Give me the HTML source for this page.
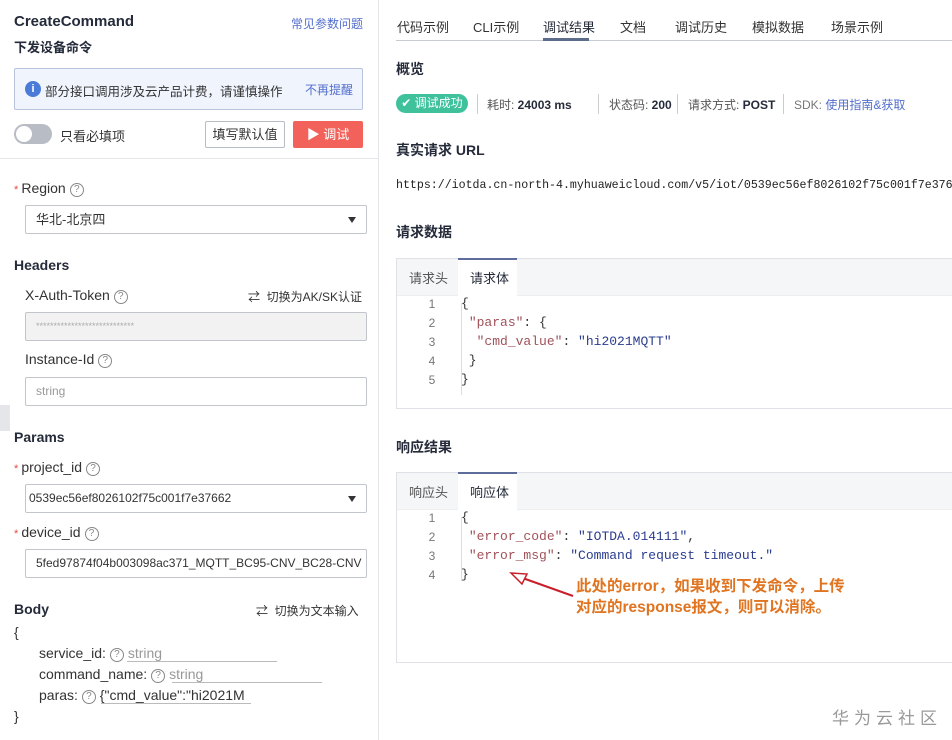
<!DOCTYPE html>
<html><head><meta charset="utf-8">
<style>
*{box-sizing:border-box;margin:0;padding:0}
body{width:952px;height:740px;overflow:hidden;background:#fff;font-family:"Liberation Sans","Noto Sans CJK SC",sans-serif;color:#252b3a;font-size:13px;position:relative}
.a{position:absolute;white-space:nowrap}
.b{font-weight:bold}
.q{display:inline-block;width:14px;height:14px;border:1px solid #888;border-radius:50%;font-size:10px;line-height:12px;text-align:center;color:#888;vertical-align:1px;margin-left:4px}
.inp{position:absolute;left:25px;width:342px;height:29px;border:1px solid #c2c6cc;border-radius:2px;font-size:12px;line-height:27px;padding-left:10px;color:#333;white-space:nowrap;overflow:hidden}
.star{color:#e5493f;font-size:11px}
.lbl{font-size:14px;color:#333}
.tri{position:absolute;right:10px;top:11px;width:0;height:0;border-left:4px solid transparent;border-right:4px solid transparent;border-top:6px solid #333}
.mono{font-family:"Liberation Mono",monospace}
.box{position:absolute;left:396px;width:560px;border:1px solid #dfe1e6}
.th{height:37px;background:#f5f6f8;position:relative;border-bottom:1px solid #eee}
.th span{position:absolute;top:9px;font-size:13px}
.act{position:absolute;left:61px;top:-1px;width:59px;height:38px;background:#fff;border-top:2px solid #5e6c9b}
.ln{position:absolute;left:30px;width:10px;text-align:center;font-size:12px;color:#777}
.cd{position:absolute;left:64px;font-size:13px;color:#333}
.k{color:#a0525a}.s{color:#2b3c8f}
.gut{position:absolute;left:64px;width:1px;background:#ddd}
</style></head><body>
<div class="a b" style="left:14px;top:13px;font-size:15px">CreateCommand</div>
<div class="a b" style="left:14px;top:37px;font-size:13px">下发设备命令</div>
<div class="a" style="left:291px;top:15px;font-size:12px;color:#526ecc">常见参数问题</div>
<div class="a" style="left:14px;top:68px;width:349px;height:42px;background:#f0f4fd;border:1px solid #b9c3de;border-radius:2px"></div>
<div class="a" style="left:25px;top:81px;width:16px;height:16px;border-radius:50%;background:#4a7bd8;color:#fff;font-size:11px;line-height:16px;text-align:center;font-weight:bold">i</div>
<div class="a" style="left:45px;top:81px;font-size:12.5px;color:#333">部分接口调用涉及云产品计费，请谨慎操作</div>
<div class="a" style="left:305px;top:81px;font-size:12px;color:#526ecc">不再提醒</div>
<div class="a" style="left:14px;top:124px;width:38px;height:20px;border-radius:10px;background:#b8bcc4"></div>
<div class="a" style="left:16px;top:126px;width:16px;height:16px;border-radius:50%;background:#fff"></div>
<div class="a" style="left:60px;top:126px;font-size:13px;color:#333">只看必填项</div>
<div class="a" style="left:205px;top:121px;width:80px;height:27px;border:1px solid #b8bcc4;border-radius:2px;font-size:13px;line-height:25px;text-align:center;color:#333">填写默认值</div>
<div class="a" style="left:293px;top:121px;width:70px;height:27px;background:#f2625b;border-radius:2px;font-size:13px;line-height:27px;text-align:center;color:#fff">▶&nbsp;调试</div>
<div class="a" style="left:0;top:158px;width:378px;height:1px;background:#e3e5e9"></div>
<div class="a" style="left:378px;top:0;width:1px;height:740px;background:#e3e5e9"></div>

<div class="a lbl" style="left:14px;top:180px"><span class="star">* </span>Region<span class="q">?</span></div>
<div class="inp" style="top:205px;font-size:13px">华北-北京四<div class="tri"></div></div>
<div class="a b" style="left:14px;top:257px;font-size:14px">Headers</div>
<div class="a lbl" style="left:25px;top:287px">X-Auth-Token<span class="q">?</span></div>
<div class="a" style="left:248px;top:288px;font-size:12px;color:#333">⇄&nbsp;&nbsp;切换为AK/SK认证</div>
<div class="inp" style="top:312px;background:#f2f2f2;color:#aaa;font-size:9px">****************************</div>
<div class="a lbl" style="left:25px;top:351px">Instance-Id<span class="q">?</span></div>
<div class="inp" style="top:377px;color:#999">string</div>
<div class="a" style="left:0;top:405px;width:10px;height:26px;background:#e4e6ea"></div>
<div class="a b" style="left:14px;top:429px;font-size:14px">Params</div>
<div class="a lbl" style="left:14px;top:459px"><span class="star">* </span>project_id<span class="q">?</span></div>
<div class="inp" style="top:484px;padding-left:3px">0539ec56ef8026102f75c001f7e37662<div class="tri"></div></div>
<div class="a lbl" style="left:14px;top:524px"><span class="star">* </span>device_id<span class="q">?</span></div>
<div class="inp" style="top:549px;font-size:12px">5fed97874f04b003098ac371_MQTT_BC95-CNV_BC28-CNV</div>
<div class="a b" style="left:14px;top:601px;font-size:14px">Body</div>
<div class="a" style="left:256px;top:602px;font-size:12px;color:#333">⇄&nbsp;&nbsp;切换为文本输入</div>
<div class="a lbl" style="left:14px;top:624px">{</div>
<div class="a lbl" style="left:39px;top:645px">service_id:<span class="q">?</span> <span style="color:#999">string</span></div>
<div class="a" style="left:127px;top:661px;width:150px;height:1px;background:#bbb"></div>
<div class="a lbl" style="left:39px;top:666px">command_name:<span class="q">?</span> <span style="color:#999">string</span></div>
<div class="a" style="left:172px;top:682px;width:150px;height:1px;background:#bbb"></div>
<div class="a lbl" style="left:39px;top:687px">paras:<span class="q">?</span> {"cmd_value":"hi2021M</div>
<div class="a" style="left:101px;top:703px;width:150px;height:1px;background:#bbb"></div>
<div class="a lbl" style="left:14px;top:708px">}</div>

<div class="a" style="left:396px;top:40px;width:556px;height:1px;background:#c8cbd0"></div>
<div class="a" style="left:543px;top:38px;width:46px;height:3px;background:#5e6c8b"></div>
<div class="a" style="left:397px;top:17px;font-size:13px;color:#333">代码示例</div>
<div class="a" style="left:473px;top:17px;font-size:13px;color:#333">CLI示例</div>
<div class="a" style="left:543px;top:17px;font-size:13px;color:#252b3a">调试结果</div>
<div class="a" style="left:620px;top:17px;font-size:13px;color:#333">文档</div>
<div class="a" style="left:675px;top:17px;font-size:13px;color:#333">调试历史</div>
<div class="a" style="left:752px;top:17px;font-size:13px;color:#333">模拟数据</div>
<div class="a" style="left:831px;top:17px;font-size:13px;color:#333">场景示例</div>

<div class="a b" style="left:396px;top:59px;font-size:14px">概览</div>
<div class="a" style="left:396px;top:94px;width:72px;height:19px;border-radius:10px;background:#3fc29c;color:#fff;font-size:12px;line-height:19px;text-align:center">✔ 调试成功</div>
<div class="a" style="left:487px;top:96px;font-size:12px;color:#555">耗时: <b style="color:#252b3a">24003 ms</b></div>
<div class="a" style="left:477px;top:94px;width:1px;height:20px;background:#ccc"></div>
<div class="a" style="left:598px;top:94px;width:1px;height:20px;background:#ccc"></div>
<div class="a" style="left:609px;top:96px;font-size:12px;color:#555">状态码: <b style="color:#252b3a">200</b></div>
<div class="a" style="left:677px;top:94px;width:1px;height:20px;background:#ccc"></div>
<div class="a" style="left:688px;top:96px;font-size:12px;color:#555">请求方式: <b style="color:#252b3a">POST</b></div>
<div class="a" style="left:783px;top:94px;width:1px;height:20px;background:#ccc"></div>
<div class="a" style="left:794px;top:96px;font-size:12px;color:#777">SDK: <span style="color:#526ecc">使用指南&amp;获取</span></div>

<div class="a b" style="left:396px;top:140px;font-size:14px">真实请求 URL</div>
<div class="a mono" style="left:396px;top:179px;font-size:11.6px;color:#222">https://iotda.cn-north-4.myhuaweicloud.com/v5/iot/0539ec56ef8026102f75c001f7e376</div>
<div class="a b" style="left:396px;top:222px;font-size:14px">请求数据</div>

<div class="box" style="top:258px;height:151px">
 <div class="th"><div class="act"></div><span style="left:12px;color:#555">请求头</span><span style="left:73px">请求体</span></div>
 <div class="gut" style="top:44px;height:92px"></div>
 <div class="ln" style="top:38px">1</div><div class="ln" style="top:57px">2</div><div class="ln" style="top:76px">3</div><div class="ln" style="top:95px">4</div><div class="ln" style="top:114px">5</div>
 <div class="cd mono" style="top:37px">{</div>
 <div class="cd mono" style="top:56px">&nbsp;<span class="k">"paras"</span>: {</div>
 <div class="cd mono" style="top:75px">&nbsp;&nbsp;<span class="k">"cmd_value"</span>: <span class="s">"hi2021MQTT"</span></div>
 <div class="cd mono" style="top:94px">&nbsp;}</div>
 <div class="cd mono" style="top:113px">}</div>
</div>

<div class="a b" style="left:396px;top:437px;font-size:14px">响应结果</div>
<div class="box" style="top:472px;height:191px">
 <div class="th"><div class="act"></div><span style="left:12px;color:#555">响应头</span><span style="left:73px">响应体</span></div>
 <div class="gut" style="top:44px;height:64px"></div>
 <div class="ln" style="top:38px">1</div><div class="ln" style="top:57px">2</div><div class="ln" style="top:76px">3</div><div class="ln" style="top:95px">4</div>
 <div class="cd mono" style="top:37px">{</div>
 <div class="cd mono" style="top:56px">&nbsp;<span class="k">"error_code"</span>: <span class="s">"IOTDA.014111"</span>,</div>
 <div class="cd mono" style="top:75px">&nbsp;<span class="k">"error_msg"</span>: <span class="s">"Command request timeout."</span></div>
 <div class="cd mono" style="top:94px">}</div>
</div>
<svg class="a" style="left:505px;top:568px" width="75" height="35"><line x1="68" y1="28" x2="12" y2="8" stroke="#c8202a" stroke-width="2"/><polygon points="6,5 22,6 17,16" fill="#fff" stroke="#c8202a" stroke-width="1.5"/></svg>
<div class="a b" style="left:576px;top:576px;font-size:15.5px;color:#e07420;line-height:21px">此处的error，如果收到下发命令，上传<br>对应的response报文，则可以消除。</div>
<div class="a" style="left:832px;top:704px;font-size:17px;color:#999;letter-spacing:5px">华为云社区</div>
</body></html>
